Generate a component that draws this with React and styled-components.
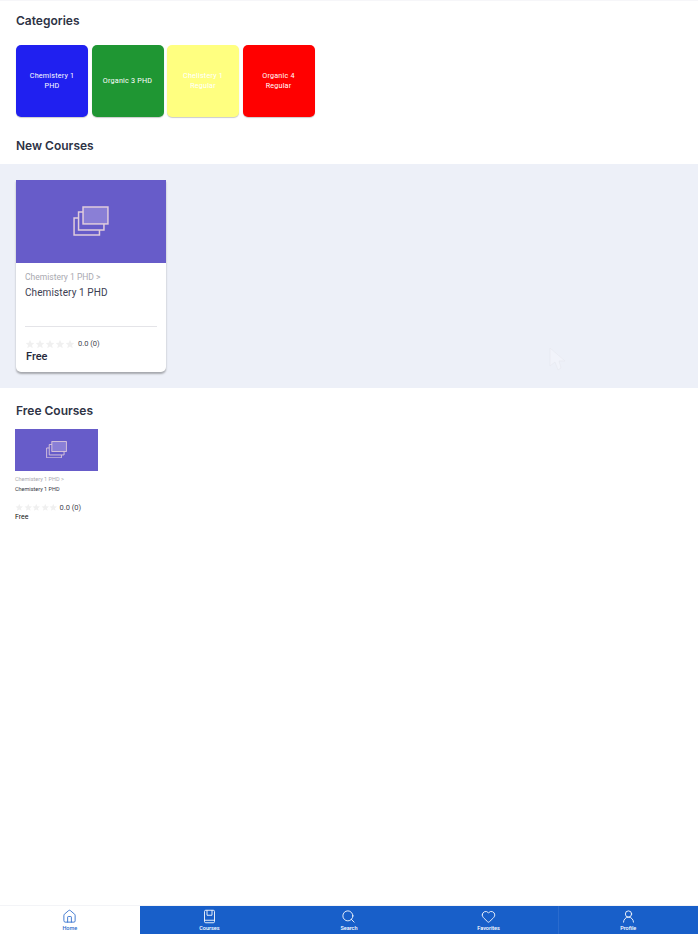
import React from 'react'
import styled, { createGlobalStyle } from 'styled-components'
import { Home, Search, Heart, UserRound } from 'lucide-react'

const GlobalStyle = createGlobalStyle`
  html, body {
    margin: 0;
    padding: 0;
    background: #fff;
    font-family: Roboto, "Liberation Sans", sans-serif;
  }
`

const categories = [
  { name: 'Chemistery 1 PHD', color: '#2020f0' },
  { name: 'Organic 3 PHD', color: '#1f9633' },
  { name: 'Chelistery 1 Regular', color: '#ffff80' },
  { name: 'Organic 4 Regular', color: '#ff0000' },
]

const CourseBook = ({ size, strokeWidth }) => (
  <svg width={size} height={size} viewBox="0 0 24 24" fill="none" stroke="currentColor" strokeWidth={strokeWidth}>
    <rect x="4" y="2" width="16" height="20" rx="2" />
    <path d="M8 2V10H16V2" />
    <path d="M4 18H20" />
  </svg>
)

const tabs = [
  { label: 'Home', Icon: Home, active: true },
  { label: 'Courses', Icon: CourseBook },
  { label: 'Search', Icon: Search },
  { label: 'Favorites', Icon: Heart },
  { label: 'Profile', Icon: UserRound, divider: true },
]

const StackIcon = ({ size }) => (
  <svg width={size} height={size * 0.83} viewBox="0 0 36 30" fill="none" stroke="#e0ccdc" strokeWidth="1.500">
    <rect x="10" y="1" width="25" height="17" fill="#8a7fd6" />
    <path d="M10 6H5.500V24H31V18" />
    <path d="M5.500 12H1V29H26.500V24" />
  </svg>
)

const Stars = ({ size }) => (
  <StarRow>
    {[0, 1, 2, 3, 4].map((i) => (
      <svg key={i} width={size} height={size} viewBox="0 0 24 24" fill="#f0f0f0">
        <path d="M12 2l3 7 7.500.6-5.700 4.900 1.800 7.400L12 18l-6.600 3.900 1.800-7.400L1.500 9.600 9 9z" />
      </svg>
    ))}
  </StarRow>
)

const App = () => {
  return (
    <Page>
      <GlobalStyle />
      <Main>
        <SectionTitle>Categories</SectionTitle>
        <CategoryRow>
          {categories.map((c) => (
            <CategoryTile key={c.name} $color={c.color}>{c.name}</CategoryTile>
          ))}
        </CategoryRow>

        <SectionTitle $top={21}>New Courses</SectionTitle>
        <Band>
          <Card>
            <CardImage><StackIcon size={36} /></CardImage>
            <CardBody>
              <Crumb>Chemistery 1 PHD &gt;</Crumb>
              <CardName>Chemistery 1 PHD</CardName>
              <Divider />
              <RatingRow>
                <Stars size={10} />
                <RatingText>0.0 (0)</RatingText>
              </RatingRow>
              <Price>Free</Price>
            </CardBody>
          </Card>
          <Cursor width="30" height="30" viewBox="0 0 30 30" fill="none">
            <path d="M1 1V19L6 15L9 23L12 21L10 14H16Z" fill="#f1f3fa" stroke="#e6e8ee" strokeWidth="0.6" />
          </Cursor>
        </Band>

        <SectionTitle $top={15}>Free Courses</SectionTitle>
        <SmallCard>
          <SmallImage><StackIcon size={21} /></SmallImage>
          <SmallCrumb>Chemistery 1 PHD &gt;</SmallCrumb>
          <SmallName>Chemistery 1 PHD</SmallName>
          <SmallRating>
            <Stars size={8.500} />
            <SmallRatingText>0.0 (0)</SmallRatingText>
          </SmallRating>
          <SmallPrice>Free</SmallPrice>
        </SmallCard>
      </Main>

      <BottomNav>
        {tabs.map(({ label, Icon, active, divider }) => (
          <Tab key={label} $active={active} $divider={divider}>
            <Icon size={15} strokeWidth={1.4} />
            <TabLabel>{label}</TabLabel>
          </Tab>
        ))}
      </BottomNav>
    </Page>
  )
}

const Page = styled.div`
  width: 698px;
  height: 934px;
  display: flex;
  flex-direction: column;
  overflow: hidden;
  border-top: 1px solid #f6f6f9;
  box-sizing: border-box;
`

const Main = styled.main`
  flex: 1;
  padding-top: 12px;
`

const SectionTitle = styled.h2`
  margin: ${(p) => p.$top || 0}px 0 0 16px;
  height: 16px;
  font: 600 12px/16px Inter, "Liberation Sans", sans-serif;
  color: #2e3345;
`

const CategoryRow = styled.div`
  display: flex;
  gap: 3.5px;
  margin: 16px 0 0 16px;
`

const CategoryTile = styled.div`
  width: 72px;
  height: 71.500px;
  box-sizing: border-box;
  padding: 0 8px;
  display: flex;
  align-items: center;
  justify-content: center;
  text-align: center;
  border-radius: 5px;
  background: ${(p) => p.$color};
  box-shadow: 0 1px 1px rgba(0, 0, 0, 0.2);
  color: #fff;
  font-size: 7.2px;
  line-height: 10px;
  letter-spacing: 0.2px;
`

const Band = styled.section`
  position: relative;
  height: 224px;
  margin-top: 10px;
  padding: 16px;
  box-sizing: border-box;
  background: #edf0f8;
`

const Card = styled.article`
  width: 150px;
  height: 192px;
  background: #fff;
  border-radius: 0 0 5px 5px;
  box-shadow: 0 2px 2px rgba(0, 0, 0, 0.3);
  overflow: hidden;
`

const CardImage = styled.div`
  height: 83px;
  display: flex;
  align-items: center;
  justify-content: center;
  background: #675cc9;
`

const CardBody = styled.div`
  padding: 9px 9px 0;
`

const Crumb = styled.div`
  font-size: 8.5px;
  line-height: 11px;
  color: #a9a9b0;
`

const CardName = styled.div`
  margin-top: 3px;
  font-size: 10px;
  line-height: 13px;
  letter-spacing: 0.1px;
  color: #3c4052;
`

const Divider = styled.div`
  height: 1px;
  margin-top: 27px;
  background: #e4e4e8;
`

const RatingRow = styled.div`
  display: flex;
  align-items: center;
  gap: 3px;
  margin-top: 12px;
`

const StarRow = styled.div`
  display: flex;
`

const RatingText = styled.span`
  font-size: 7.500px;
  line-height: 10px;
  color: #44464f;
`

const Price = styled.div`
  margin: 1px 0 0 1px;
  font-size: 11px;
  font-weight: 500;
  line-height: 14px;
  color: #262a3c;
`

const Cursor = styled.svg`
  position: absolute;
  left: 549px;
  top: 183px;
`

const SmallCard = styled.article`
  width: 83px;
  margin: 10px 0 0 15px;
`

const SmallImage = styled.div`
  height: 42px;
  display: flex;
  align-items: center;
  justify-content: center;
  background: #675cc9;
`

const SmallCrumb = styled.div`
  margin-top: 4px;
  font-size: 5.5px;
  line-height: 8px;
  color: #a9a9b0;
`

const SmallName = styled.div`
  margin-top: 2px;
  font-size: 5.5px;
  line-height: 8px;
  color: #33363f;
`

const SmallRating = styled.div`
  display: flex;
  align-items: center;
  gap: 2px;
  margin-top: 10px;
`

const SmallRatingText = styled.span`
  font-size: 7.500px;
  line-height: 10px;
  color: #44464f;
`

const SmallPrice = styled.div`
  margin-top: 0;
  font-size: 7px;
  font-weight: 400;
  line-height: 9px;
  color: #111;
`

const BottomNav = styled.nav`
  display: grid;
  grid-template-columns: repeat(5, 1fr);
  height: 29px;
  background: #185fc9;
  border-top: 1px solid #f3f4f7;
  box-sizing: border-box;
`

const Tab = styled.div`
  display: flex;
  flex-direction: column;
  align-items: center;
  justify-content: flex-start;
  padding-top: 3px;
  background: ${(p) => (p.$active ? '#fff' : 'transparent')};
  color: ${(p) => (p.$active ? '#2d6ccb' : '#fff')};
  box-shadow: ${(p) => (p.$divider ? 'inset 1px 0 0 #2a6bce' : 'none')};
`

const TabLabel = styled.span`
  margin-top: 1px;
  font-size: 5.5px;
  font-weight: 500;
  line-height: 7px;
`

export default App
